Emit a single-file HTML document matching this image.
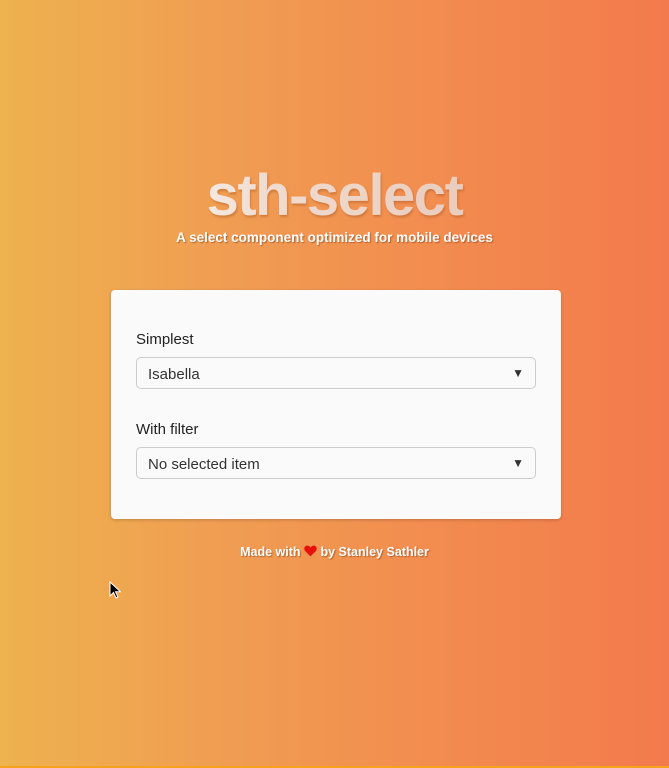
<!DOCTYPE html>
<html><head><meta charset="utf-8"><style>
html,body{margin:0;padding:0;width:669px;height:768px;overflow:hidden}
body{background:linear-gradient(90deg,#eeb24f 0%,#f09c52 35%,#f28c4f 65%,#f37a4c 100%);font-family:"Liberation Sans",sans-serif;position:relative}
.bar{position:absolute;left:0;right:0;bottom:0;height:2px;background:#f7a21c}
h1{position:absolute;top:160px;left:0;width:669px;text-align:center;margin:0;font-size:58px;font-weight:bold;letter-spacing:-1.5px;
background:linear-gradient(90deg,#fff 0%,#fff 15%,#f0dcd0 40%,#e2bca8 100%);-webkit-background-clip:text;background-clip:text;color:transparent;
filter:drop-shadow(1px 2px 1px rgba(150,70,20,.35));line-height:72px}
.sub{position:absolute;top:230px;left:0;width:669px;text-align:center;color:#fff;font-weight:bold;font-size:13.5px;text-shadow:1px 1px 1px rgba(120,50,10,.5)}
.card{position:absolute;left:111px;top:290px;width:450px;height:229px;background:#fafafa;border-radius:4px;box-shadow:0 1px 3px rgba(0,0,0,.2)}
.lbl{position:absolute;left:25px;font-size:15px;color:#222}
.sel{position:absolute;left:25px;width:398px;height:30px;border:1px solid #ccc;border-radius:5px;background:#fafafa;font-size:15px;color:#333;line-height:33px;box-sizing:content-box}
.sel span{position:absolute;left:11px}
.sel i{position:absolute;right:11px;top:0;font-style:normal;font-size:12px;color:#333;line-height:30px}
.foot{position:absolute;top:545px;left:0;width:669px;text-align:center;color:#fff;font-weight:bold;font-size:12.5px;text-shadow:1px 1px 1px rgba(120,50,10,.5)}
</style></head><body>
<h1>sth-select</h1>
<div class="sub">A select component optimized for mobile devices</div>
<div class="card">
<div class="lbl" style="top:41px">Simplest</div>
<div class="sel" style="top:67px"><span>Isabella</span><i>▼</i></div>
<div class="lbl" style="top:131px">With filter</div>
<div class="sel" style="top:157px"><span>No selected item</span><i>▼</i></div>
</div>
<div class="foot">Made with <svg width="13" height="12" viewBox="0 0 24 22" style="vertical-align:-1px"><path d="M12 21L2 11C-1 7 1 1 6 1c3 0 5 2 6 4 1-2 3-4 6-4 5 0 7 6 4 10z" fill="#e8100a"/></svg> by Stanley Sathler</div>
<svg style="position:absolute;left:109px;top:581px" width="12" height="18" viewBox="0 0 12 18"><path d="M1 1v14l3.5-3.5 2.5 5.5 2-1-2.5-5.3h5z" fill="#000" stroke="#fff" stroke-width="1"/></svg>
<div class="bar"></div>
</body></html>
